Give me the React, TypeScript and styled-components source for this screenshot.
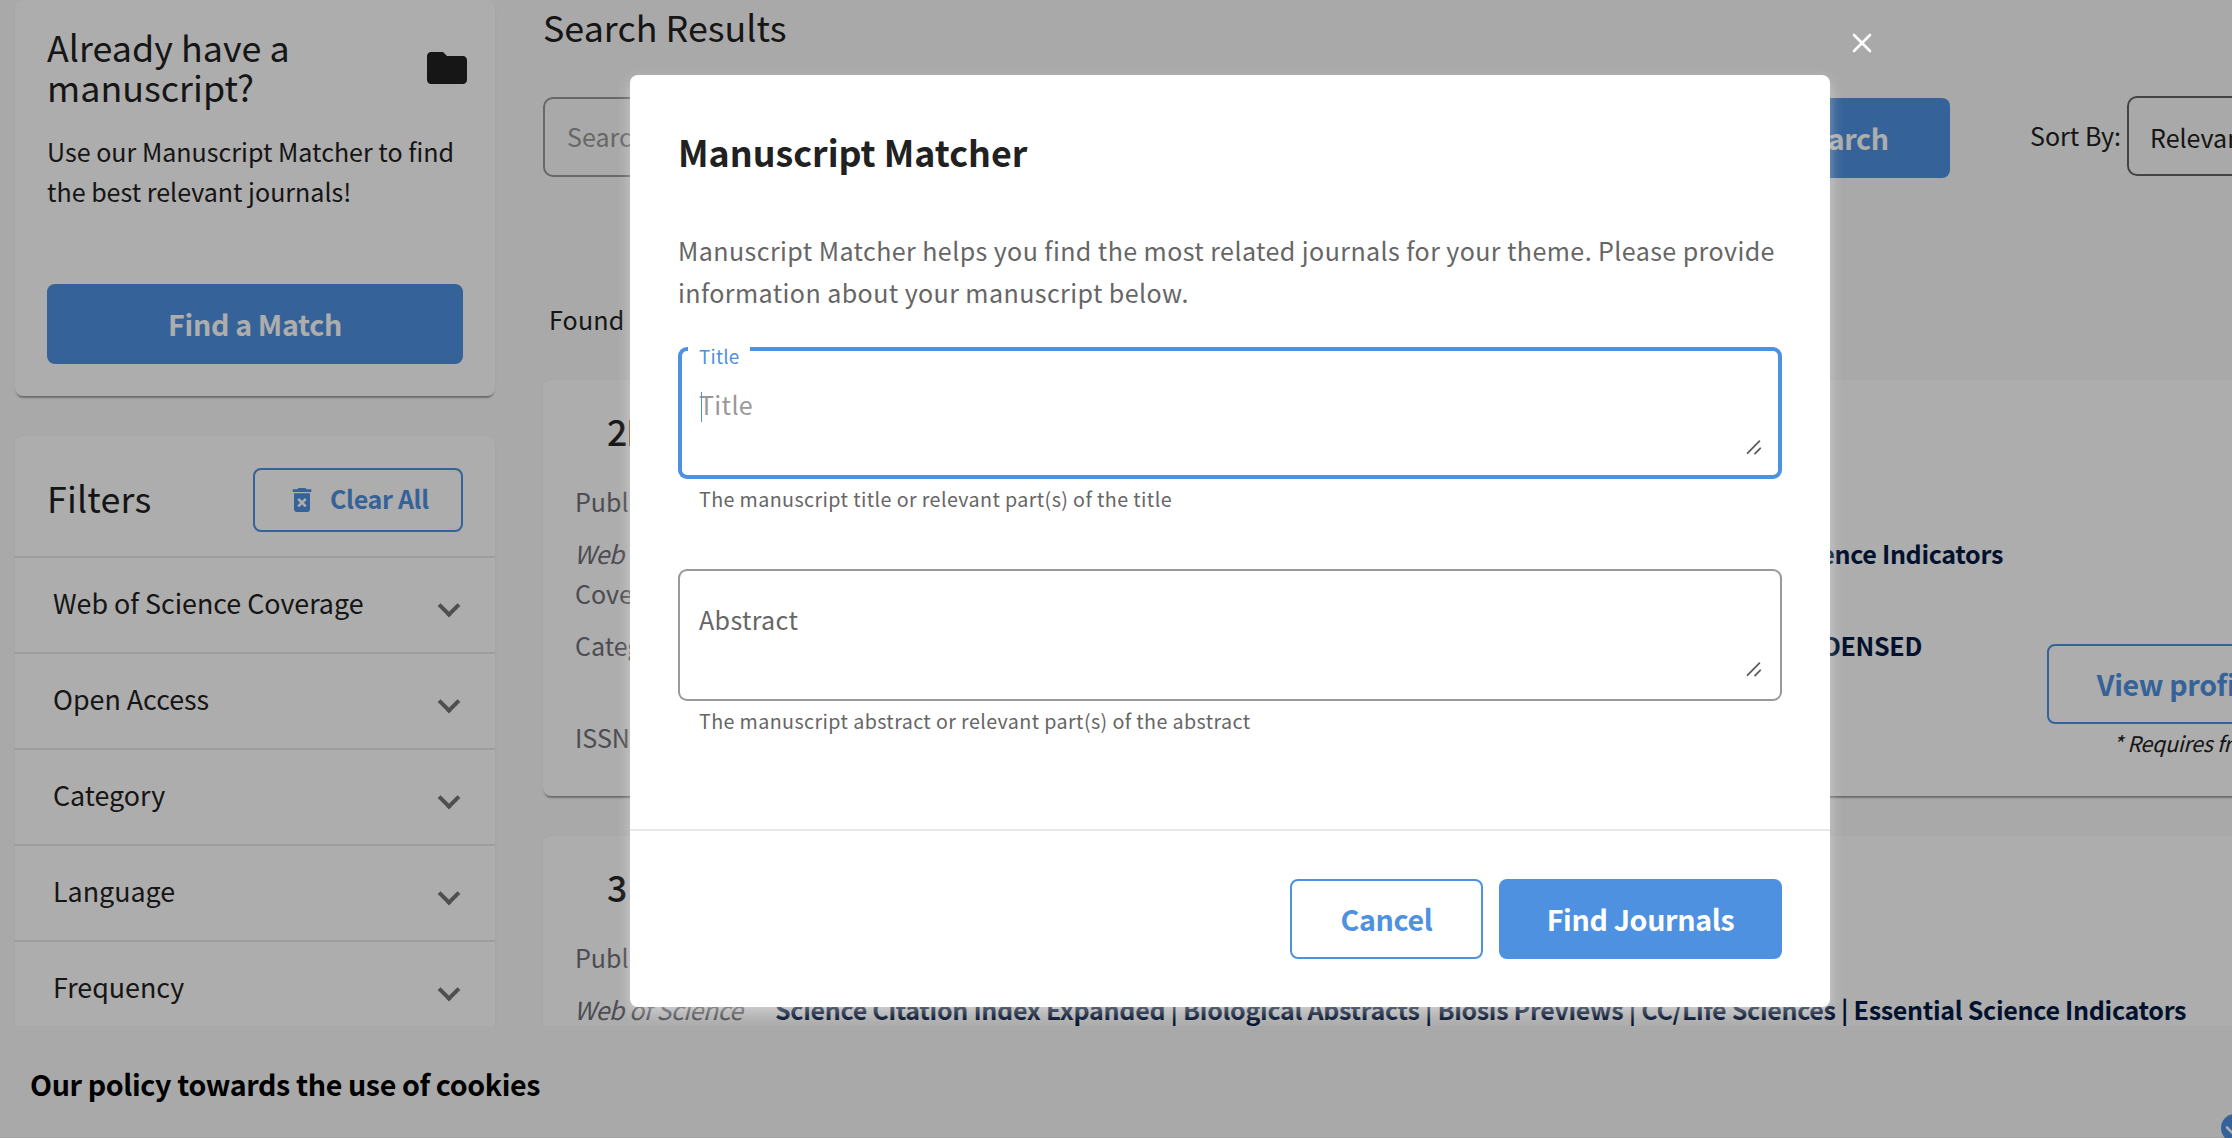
import React from 'react';
import styled, { createGlobalStyle } from 'styled-components';

const blue = '#4e91e0';
const ink = '#212121';

const GlobalStyle = createGlobalStyle`
  *, *::before, *::after { box-sizing: border-box; }
  html, body { margin: 0; padding: 0; overflow: hidden; }
  body {
    font-family: "Noto Sans CJK SC", "Noto Sans", sans-serif;
    color: ${ink};
    background: #fafafa;
  }
  h1, h2, h3, p { margin: 0; }
`;

const Screen = styled.div`
  position: relative;
  width: 2232px;
  height: 1138px;
  overflow: hidden;
  background: #fafafa;
`;

const Page = styled.div`
  display: flex;
  gap: 48px;
  height: 1026px;
  overflow: hidden;
  padding-left: 15px;
`;

const Sidebar = styled.aside`
  flex: none;
  width: 480px;
  display: flex;
  flex-direction: column;
  gap: 40px;
`;

const Card = styled.section`
  flex: none;
  background: #fff;
  border-radius: 8px;
  box-shadow: 0 4px 2px -2px rgba(0, 0, 0, 0.26), 0 2px 2px -1px rgba(0, 0, 0, 0.2),
    0 1px 4px 0 rgba(0, 0, 0, 0.05);
`;

const MatcherCard = styled(Card)`
  height: 396px;
  padding: 26px 32px 32px;
  display: flex;
  flex-direction: column;
`;

const CardHead = styled.div`
  display: flex;
  justify-content: space-between;
`;

const Heading = styled.h2`
  font-size: 35.8px;
  line-height: 40px;
  font-weight: 400;
  letter-spacing: 0.04px;
`;

const FolderBox = styled.div`
  flex: none;
  width: 48px;
  height: 48px;
  margin: 18px -8px 0 0;
  svg { display: block; }
`;

const Body = styled.p`
  font-size: 25.05px;
  line-height: 40px;
`;

const MatcherText = styled(Body)`
  margin-top: 25px;
  width: 430px;
  flex: 1;
`;

const Button = styled.button<{ $outlined?: boolean; $width?: number }>`
  flex: none;
  height: 80px;
  width: ${(p) => (p.$width ? `${p.$width}px` : 'auto')};
  padding: 0;
  display: block;
  border: ${(p) => (p.$outlined ? `2px solid ${blue}` : '0')};
  border-radius: 8px;
  background: ${(p) => (p.$outlined ? 'transparent' : blue)};
  color: ${(p) => (p.$outlined ? blue : '#fff')};
  font-family: inherit;
  font-size: 28.63px;
  font-weight: 700;
  letter-spacing: -0.34px;
  line-height: ${(p) => (p.$outlined ? '75px' : '79px')};
  white-space: nowrap;
  text-align: center;
  > span { display: block; height: ${(p) => (p.$outlined ? '76px' : '80px')}; }
`;

const FiltersCard = styled(Card)`
  height: 640px;
`;

const FiltersHead = styled.div`
  display: flex;
  justify-content: space-between;
  align-items: flex-start;
  height: 120px;
  padding: 32px 32px 0;
`;

const FiltersTitle = styled(Heading)`
  margin-top: -1px;
  line-height: 60px;
  letter-spacing: 0.2px;
`;

const ClearButton = styled.button`
  width: 210px;
  height: 64px;
  padding: 0 0 0 31px;
  border: 2px solid ${blue};
  border-radius: 8px;
  background: transparent;
  color: ${blue};
  display: flex;
  align-items: flex-start;
  gap: 12px;
  font-family: inherit;
  font-size: 25.05px;
  font-weight: 700;
  letter-spacing: -0.34px;
  line-height: 56px;
  svg { margin-top: 14px; }
`;

const FilterRow = styled.div`
  display: flex;
  justify-content: space-between;
  align-items: flex-start;
  height: 96px;
  padding: 0 38px;
  border-top: 2px solid #e7e7e7;
  font-size: 26.84px;
  line-height: 89px;
`;

const Chevron = styled.i`
  width: 16px;
  height: 16px;
  margin-top: 40px;
  border: solid #757575;
  border-width: 0 4px 4px 0;
  transform: rotate(45deg);
`;

const Main = styled.main`
  flex: none;
  width: 1820px;
  padding-top: 6px;
`;

const SearchRow = styled.div`
  display: flex;
  align-items: flex-start;
  height: 82px;
  margin-top: 50px;
`;

const SearchInput = styled.div`
  flex: none;
  width: 1160px;
  height: 80px;
  margin: 1px 30px 0 0;
  padding-left: 22px;
  border: 2px solid #999;
  border-radius: 10px;
  color: #999;
  font-size: 25.05px;
  line-height: 74px;
`;

const SearchButton = styled(Button)`
  margin-top: 2px;
`;

const SortLabel = styled.span`
  flex: none;
  width: 97px;
  margin-left: 80px;
  font-size: 25.05px;
  line-height: 78px;
`;

const SortSelect = styled.div`
  flex: none;
  width: 220px;
  height: 80px;
  padding-left: 21px;
  border: 2px solid #646464;
  border-radius: 10px;
  font-size: 25.05px;
  line-height: 78px;
`;

const Found = styled(Body)`
  margin: 121px 0 41px 6px;
  letter-spacing: 0.15px;
`;

const ResultCard = styled(Card)`
  display: flex;
  height: 416px;
  margin-bottom: 40px;
  padding: 30px 32px 0;
`;

const ResultBody = styled.div`
  flex: none;
  width: 1440px;
`;

const ResultTitle = styled.h3`
  margin: 0 0 31px 32px;
  font-size: 35.8px;
  line-height: 40px;
  font-weight: 500;
  letter-spacing: -1.5px;
`;

const Field = styled.div<{ $lines?: number }>`
  display: flex;
  height: ${(p) => (p.$lines || 1) * 40}px;
  margin-bottom: 12px;
  font-size: 25.05px;
  line-height: 40px;
  white-space: nowrap;
`;

const FieldLabel = styled.div`
  flex: none;
  width: 200px;
  color: #717179;
  white-space: normal;
  em {
    margin-left: -1px;
    letter-spacing: -0.52px;
  }
`;

const FieldValue = styled.div<{ $width?: number }>`
  width: ${(p) => (p.$width ? `${p.$width}px` : 'auto')};
  display: flex;
  justify-content: flex-end;
  color: #031a45;
  font-weight: 700;
  letter-spacing: -0.309px;
`;

const Actions = styled.div`
  flex: none;
  width: 340px;
  margin: 234px 0 0 32px;
`;

const Note = styled.p`
  margin: -2px 0 0 66px;
  font-size: 21.47px;
  line-height: 41px;
  font-style: italic;
  letter-spacing: -0.3px;
  white-space: nowrap;
`;

const CookieBar = styled.footer`
  display: flex;
  justify-content: space-between;
  height: 112px;
  padding: 37px 0 0 30px;
  background: #f9f9f9;
  border-bottom: 1px solid #ededed;
`;

const CookieTitle = styled.h2`
  font-size: 28.63px;
  line-height: 41px;
  font-weight: 700;
  letter-spacing: -0.375px;
  color: #000;
`;

const CookieToggle = styled.div`
  flex: none;
  margin: 51px -17px 0 0;
  svg { display: block; }
`;

const Scrim = styled.div`
  position: absolute;
  inset: 0;
  background: rgba(0, 0, 0, 0.32);
`;

const CloseIcon = styled.svg`
  position: absolute;
  left: 1850px;
  top: 31px;
`;

const Modal = styled.div`
  position: absolute;
  left: 630px;
  top: 75px;
  width: 1200px;
  height: 932px;
  display: flex;
  flex-direction: column;
  background: #fff;
  border-radius: 8px;
  box-shadow: 0 6px 14px rgba(255, 255, 255, 0.42);
`;

const ModalContent = styled.div`
  flex: 1;
  padding: 52px 48px 0;
`;

const ModalTitle = styled.h1`
  font-size: 35.8px;
  line-height: 48px;
  font-weight: 700;
`;

const ModalText = styled.p`
  margin: 54px 0 34px;
  font-size: 25.05px;
  line-height: 42px;
  letter-spacing: 0.41px;
  color: #666;
`;

const Outline = styled.div<{ $focused?: boolean }>`
  position: relative;
  height: 132px;
  display: flex;
  justify-content: space-between;
  align-items: flex-start;
  border-radius: 9px;
  box-shadow: inset 0 0 0 ${(p) => (p.$focused ? `4px ${blue}` : '2px #999')};
  padding: ${(p) => (p.$focused ? '37px' : '30px')} 20px 0 21px;
  color: ${(p) => (p.$focused ? '#999' : '#666')};
  font-size: 25.05px;
  line-height: 40px;
  letter-spacing: 0.35px;
  > svg { align-self: flex-end; margin-bottom: 24px; }
`;

const Notch = styled.span`
  position: absolute;
  left: 10px;
  top: -3px;
  width: 62px;
  height: 24px;
  padding-left: 11px;
  background: #fff;
  color: ${blue};
  font-size: 18.79px;
  line-height: 23px;
  letter-spacing: 0.25px;
`;

const Caret = styled.span`
  position: absolute;
  left: 23px;
  top: 45px;
  width: 1px;
  height: 30px;
  background: ${blue};
`;

const Helper = styled.p`
  margin: 6px 0 57px 21px;
  font-size: 19.69px;
  line-height: 27px;
  letter-spacing: 0.39px;
  color: #666;
`;

const ModalFooter = styled.div`
  display: flex;
  justify-content: flex-end;
  gap: 16px;
  height: 178px;
  padding: 48px;
  border-top: 2px solid #e8e8e8;
`;

const ResizeHandle = () => (
  <svg width="16" height="16" viewBox="0 0 16 16" fill="none" stroke="#5c5c5c" strokeWidth="1.8" strokeLinecap="round">
    <path d="M1.6 14.2 13.4 2.2M9 14.6 14.2 9.3" />
  </svg>
);

const filters = ['Web of Science Coverage', 'Open Access', 'Category', 'Language', 'Frequency'];

type Result = {
  title: string;
  coverage: string;
  coverageWidth?: number;
  categories: string;
};

const results: Result[] = [
  {
    title: '2D Materials',
    coverage:
      'Science Citation Index Expanded | CC/Physical, Chemical & Earth Sciences | Essential Science Indicators',
    coverageWidth: 1228,
    categories: 'Materials Science | MATERIALS SCIENCE, MULTIDISCIPLINARY | PHYSICS, CONDENSED',
  },
  {
    title: '3 Biotech',
    coverage:
      'Science Citation Index Expanded | Biological Abstracts | Biosis Previews | CC/Life Sciences | Essential Science Indicators',
    categories: 'Biotechnology & Applied Microbiology',
  },
];

export default function App() {
  return (
    <Screen>
      <GlobalStyle />
      <Page>
        <Sidebar>
          <MatcherCard>
            <CardHead>
              <Heading>
                Already have a<br />
                manuscript?
              </Heading>
              <FolderBox>
                <svg width="48" height="48" viewBox="0 0 24 24" fill={ink}>
                  <path d="M10 4H4c-1.1 0-1.99.9-1.99 2L2 18c0 1.1.9 2 2 2h16c1.1 0 2-.9 2-2V8c0-1.1-.9-2-2-2h-8l-2-2z" />
                </svg>
              </FolderBox>
            </CardHead>
            <MatcherText>
              Use our Manuscript Matcher to find
              <br />
              the best relevant journals!
            </MatcherText>
            <Button>
              <span>Find a Match</span>
            </Button>
          </MatcherCard>
          <FiltersCard>
            <FiltersHead>
              <FiltersTitle>Filters</FiltersTitle>
              <ClearButton>
                <svg width="32" height="32" viewBox="0 0 24 24" fill="currentColor">
                  <path d="M6 19c0 1.1.9 2 2 2h8c1.1 0 2-.9 2-2V7H6v12zm2.46-7.12 1.41-1.41L12 12.59l2.12-2.12 1.41 1.41L13.41 14l2.12 2.12-1.41 1.41L12 15.41l-2.12 2.12-1.41-1.41L10.59 14l-2.13-2.12zM15.5 4l-1-1h-5l-1 1H5v2h14V4z" />
                </svg>
                Clear All
              </ClearButton>
            </FiltersHead>
            {filters.map((name) => (
              <FilterRow key={name}>
                {name}
                <Chevron />
              </FilterRow>
            ))}
          </FiltersCard>
        </Sidebar>
        <Main>
          <Heading>Search Results</Heading>
          <SearchRow>
            <SearchInput>Search by keyword</SearchInput>
            <SearchButton $width={217}>
              <span>Search</span>
            </SearchButton>
            <SortLabel>Sort By:</SortLabel>
            <SortSelect>Relevancy</SortSelect>
          </SearchRow>
          <Found>Found</Found>
          {results.map((r) => (
            <ResultCard key={r.title}>
              <ResultBody>
                <ResultTitle>{r.title}</ResultTitle>
                <Field>
                  <FieldLabel>Publisher:</FieldLabel>
                </Field>
                <Field $lines={2}>
                  <FieldLabel>
                    <em>Web of Science</em>
                    <br />
                    Coverage:
                  </FieldLabel>
                  <FieldValue $width={r.coverageWidth}>{r.coverage}</FieldValue>
                </Field>
                <Field $lines={2}>
                  <FieldLabel>Category:</FieldLabel>
                  <FieldValue $width={1147}>{r.categories}</FieldValue>
                </Field>
                <Field>
                  <FieldLabel>ISSN:</FieldLabel>
                </Field>
              </ResultBody>
              <Actions>
                <Button $outlined $width={336}>
                  <span>View profile page</span>
                </Button>
                <Note>* Requires free login.</Note>
              </Actions>
            </ResultCard>
          ))}
        </Main>
      </Page>
      <CookieBar>
        <CookieTitle>Our policy towards the use of cookies</CookieTitle>
        <CookieToggle>
          <svg width="28" height="28" viewBox="0 0 28 28">
            <circle cx="14" cy="14" r="14" fill={blue} />
            <path d="M6 13.5 12 19.5 22 9" fill="none" stroke="#fff" strokeWidth="2.6" strokeLinecap="round" />
          </svg>
        </CookieToggle>
      </CookieBar>
      <Scrim />
      <CloseIcon width="24" height="24" viewBox="0 0 24 24" stroke="#fff" strokeWidth="2.6" strokeLinecap="round">
        <path d="M4 4l16 16M20 4 4 20" />
      </CloseIcon>
      <Modal>
        <ModalContent>
          <ModalTitle>Manuscript Matcher</ModalTitle>
          <ModalText>
            Manuscript Matcher helps you find the most related journals for your theme. Please provide
            information about your manuscript below.
          </ModalText>
          <Outline $focused>
            <Notch>Title</Notch>
            <Caret />
            Title
            <ResizeHandle />
          </Outline>
          <Helper>The manuscript title or relevant part(s) of the title</Helper>
          <Outline>
            Abstract
            <ResizeHandle />
          </Outline>
          <Helper>The manuscript abstract or relevant part(s) of the abstract</Helper>
        </ModalContent>
        <ModalFooter>
          <Button $outlined $width={193}>
            <span>Cancel</span>
          </Button>
          <Button $width={283}>
            <span>Find Journals</span>
          </Button>
        </ModalFooter>
      </Modal>
    </Screen>
  );
}
